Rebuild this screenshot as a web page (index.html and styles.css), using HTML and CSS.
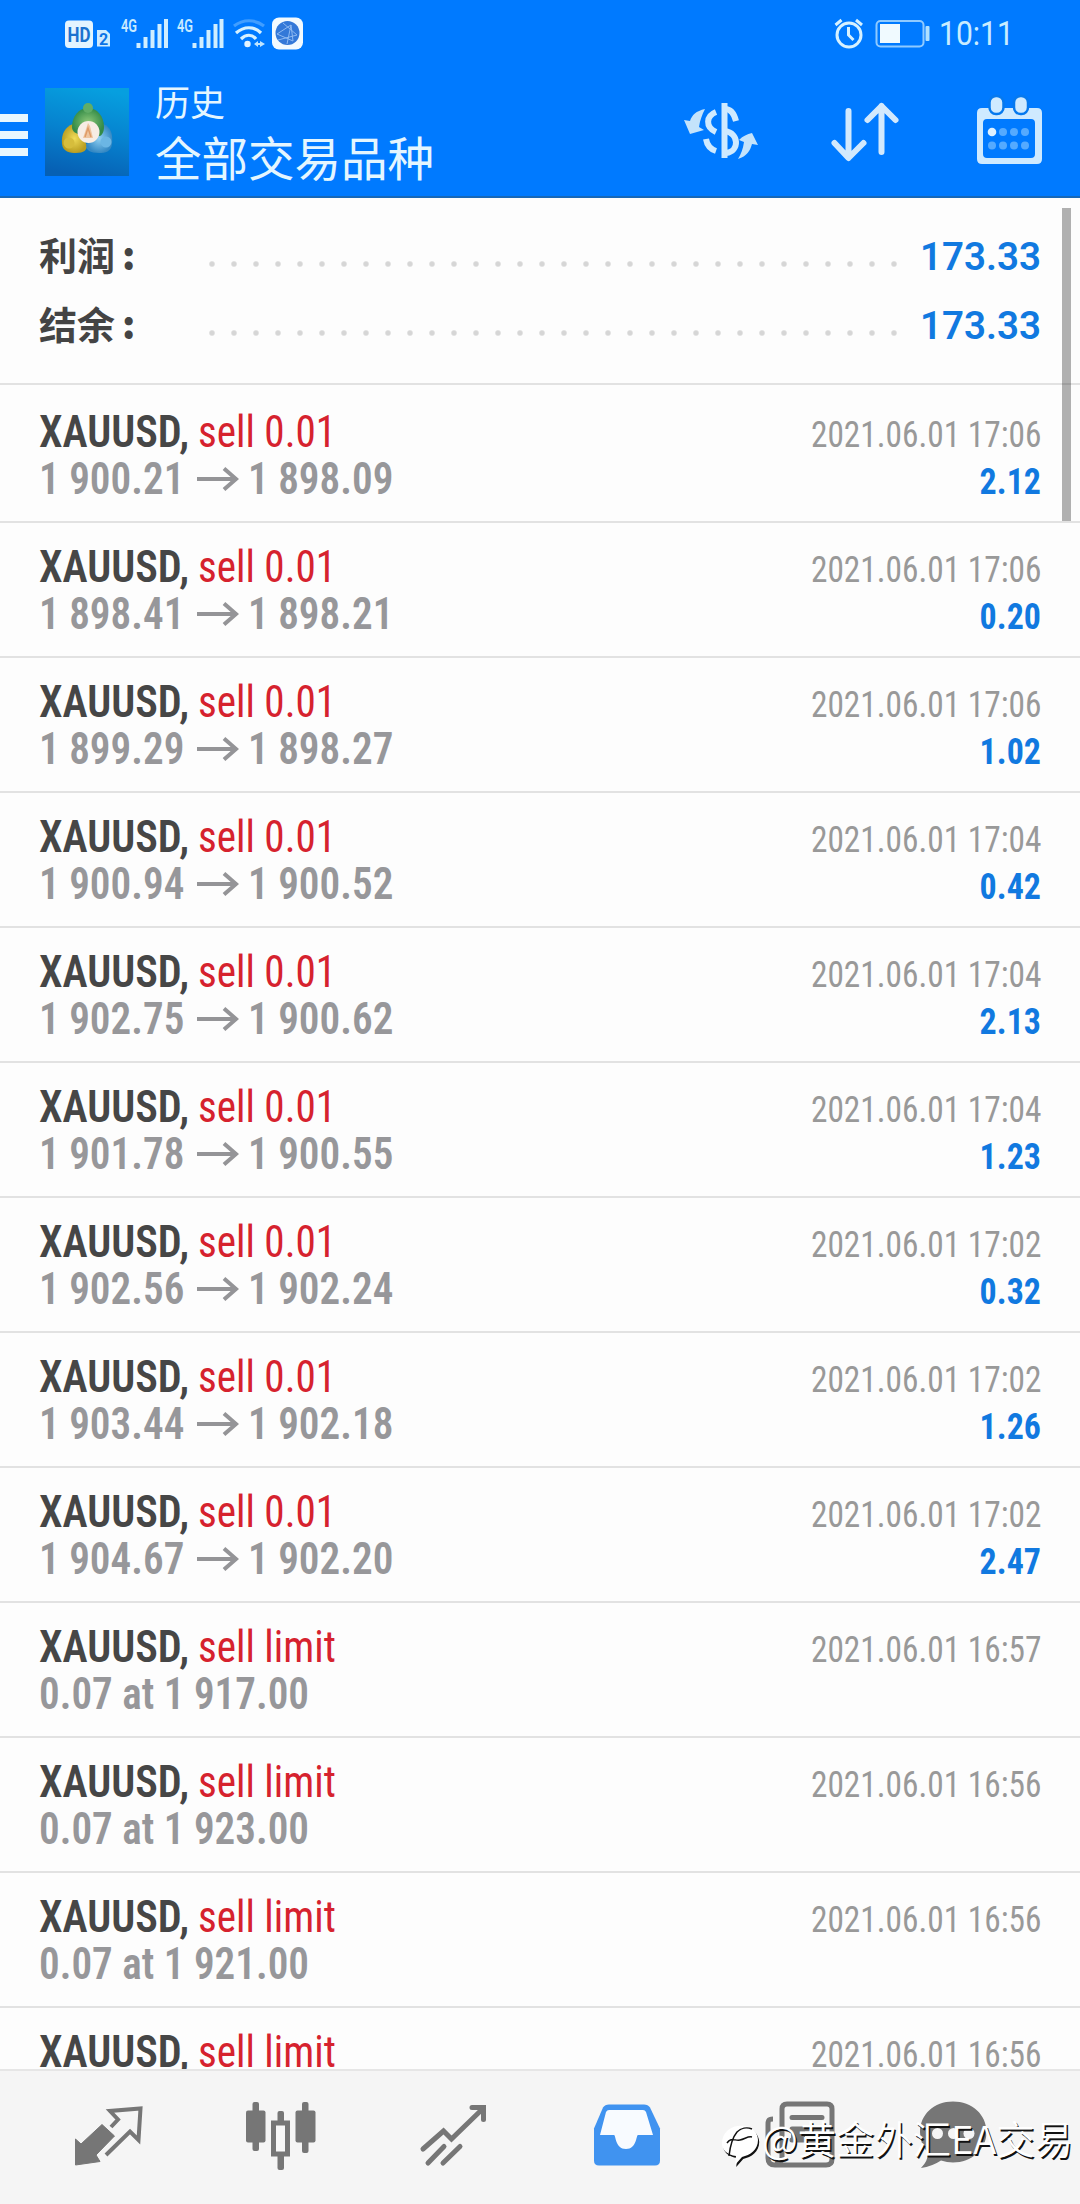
FILE: index.html
```html
<!DOCTYPE html>
<html lang="zh-CN">
<head>
<meta charset="utf-8">
<title>历史</title>
<link rel="stylesheet" href="styles.css">
</head>
<body>
<div class="screen">
  <header class="top">
    <div class="status">
      <svg class="status-left" viewBox="60 10 250 48" width="250" height="48">
        <defs><symbol id="arrow" viewBox="0 0 42 24"><path d="M0 12h39M27 1.500l12 10.500-12 10.500"/></symbol></defs>
        <rect x="65" y="20.500" width="28" height="27.500" rx="4" fill="#e3f4ff"/>
        <text x="79" y="41.500" class="hd" textLength="23" lengthAdjust="spacingAndGlyphs">HD</text>
        <path d="M97 30h9l4 4v12.500H97z" fill="#cdebff"/>
        <text x="103.500" y="44.500" class="sim">2</text>
        <text x="121" y="32" class="net" textLength="16" lengthAdjust="spacingAndGlyphs">4G</text>
        <path d="M138.500 48v-5M145.500 48V37M152.500 48V30M159.500 48V24M166 48V19" class="bars"/>
        <text x="177" y="32" class="net" textLength="16" lengthAdjust="spacingAndGlyphs">4G</text>
        <path d="M194.500 48v-5M201.500 48V37M208.500 48V30M215.500 48V24M221.500 48V19" class="bars"/>
        <g fill="none" stroke="#d6f1ff" stroke-width="3.200">
          <path d="M234 26c9-7 21-7 30 0" opacity=".3"/>
          <path d="M236 33c8-7 18-7 25 0"/>
          <path d="M241 39c5-5 11-5 15 0"/>
        </g>
        <circle cx="247.500" cy="44" r="3.200" fill="#e3f4ff"/>
        <path d="M254 44l4-3v2h2v-2l5 3-5 3v-2h-2v2z" fill="#bfe5ff"/>
        <rect x="272" y="17.500" width="31" height="32" rx="7" fill="#f2faff"/>
        <circle cx="287.500" cy="33" r="12" fill="#3378d8"/>
        <path d="M277 34l14-9 2 16-16-7M283 23l14 12M291 25l-4 19M278 40l19-5" stroke="#8db9f2" stroke-width="1" fill="none"/>
      </svg>
      <div class="status-right">
        <svg viewBox="832 16 102 36" width="102" height="36">
          <circle cx="849" cy="35" r="12" fill="none" stroke="#d6f1ff" stroke-width="3"/>
          <path d="M848.500 27v8l5 5" fill="none" stroke="#d6f1ff" stroke-width="3"/>
          <path d="M835.500 25l6-5M862 25l-6-5" stroke="#d6f1ff" stroke-width="3"/>
          <rect x="876.500" y="21" width="47" height="25.500" rx="4" fill="none" stroke="#8fcaff" stroke-width="2"/>
          <rect x="880" y="24" width="20" height="19" fill="#f0faff"/>
          <rect x="925.500" y="26" width="4" height="15" rx="1" fill="#b0e0ff"/>
        </svg>
        <span class="clock">10:11</span>
      </div>
    </div>
    <div class="bar">
      <div class="menu"><i></i><i></i><i></i></div>
      <svg class="app-icon" viewBox="45 88 84 88" width="84" height="88">
        <defs>
          <linearGradient id="sky" x1="0.600" y1="0" x2="0.400" y2="1"><stop offset="0" stop-color="#069fdf"/><stop offset=".5" stop-color="#0682cf"/><stop offset="1" stop-color="#0660b4"/></linearGradient>
          <radialGradient id="gold"><stop offset="0" stop-color="#f0dc58"/><stop offset="1" stop-color="#b99d20"/></radialGradient>
          <radialGradient id="leaf"><stop offset="0" stop-color="#8cc878"/><stop offset="1" stop-color="#338b48"/></radialGradient>
          <radialGradient id="aqua"><stop offset="0" stop-color="#8fd0f2"/><stop offset="1" stop-color="#3589c4"/></radialGradient>
        </defs>
        <rect x="45" y="88" width="84" height="88" fill="url(#sky)"/>
        <path d="M73 124c-8 3-12 10-11 20 1 8 8 9 14 9 8 0 11-3 11-8z" fill="url(#gold)"/>
        <path d="M103 124c8 3 10 10 9 20-1 8-7 9-13 9-9 0-13-3-13-8z" fill="url(#aqua)"/>
        <path d="M72 127c0-11 7-19 16-19s16 8 16 19c0 5-2 8-4 9L78 134c-3-1-6-3-6-7z" fill="url(#leaf)"/>
        <circle cx="88" cy="108" r="5" fill="#61ad67"/>
        <circle cx="69" cy="143" r="5.500" fill="#d6bd3c"/>
        <circle cx="106" cy="142" r="5.500" fill="#6bb6e4"/>
        <circle cx="88.500" cy="132" r="11" fill="#f7ede4"/>
        <path d="M83 138l5-15 2 3 3 12z" fill="#eec5a0"/><path d="M85 137l3-9 3 9" fill="none" stroke="#df9b67" stroke-width="1.500"/>
      </svg>
      <div class="titles"><div class="title">历史</div><div class="subtitle">全部交易品种</div></div>
      <svg class="tools" viewBox="680 90 370 80" width="370" height="80">
        <g fill="none" stroke="#cfeaff" stroke-width="6">
          <path d="M724.500 103v55"/>
          <path d="M716 112c-10 4-11 15 0 20M706 139c1 6 4 10 10 12"/>
          <path d="M725 109c6 0 9 4 11 12M725 131c14 2 15 20 1 22"/>
        </g>
        <g fill="#c4e3fb">
          <path d="M705 109c-9 2-13 6-15 12l-6-1 6 14 14-4-5-3c1-7 3-12 6-18z"/>
          <path d="M738 159c9-3 12-8 14-15l6 1-6-12c-5 1-9 3-13 7l5 2c-1 7-3 12-6 17z"/>
        </g>
        <g fill="none" stroke="#d2e9fd" stroke-width="6" stroke-linecap="round" stroke-linejoin="round">
          <path d="M848.500 111v46M834.500 143l14 15 15-15"/>
          <path d="M881.500 152v-46M867.500 120l14-14 14 14"/>
        </g>
        <path d="M982 108h55q5 0 5 5v46q0 5-5 5h-55q-5 0-5-5v-46q0-5 5-5zM987 119q-4 0-4 4v31q0 4 4 4h44q4 0 4-4v-31q0-4-4-4z" fill="#cfeaff" fill-rule="evenodd"/>
        <g fill="#cfeaff" stroke="#0679ee" stroke-width="2.500"><rect x="989.500" y="96" width="14" height="18" rx="6.500"/><rect x="1014" y="96" width="14" height="18" rx="6.500"/></g>
        <g fill="#55aaff"><circle cx="1003" cy="132" r="4"/><circle cx="1014" cy="132" r="4"/><circle cx="1025" cy="132" r="4"/><circle cx="992" cy="145.500" r="4"/><circle cx="1003" cy="145.500" r="4"/><circle cx="1014" cy="145.500" r="4"/><circle cx="1025" cy="145.500" r="4"/></g>
        <circle cx="992" cy="132" r="4.300" fill="#dff1ff"/>
      </svg>
    </div>
  </header>

  <main class="history">
    <section class="summary">
      <div class="total"><span class="label">利润<b>:</b></span><span class="dots"></span><span class="amount">173.33</span></div>
      <div class="total"><span class="label">结余<b>:</b></span><span class="dots"></span><span class="amount">173.33</span></div>
    </section>
    <ul class="deals">
      <li class="deal"><div class="line"><span class="symbol">XAUUSD,</span><span class="side">sell 0.01</span><span class="time">2021.06.01 17:06</span></div><div class="line"><span class="open">1 900.21</span><svg class="arrow"><use href="#arrow"/></svg><span class="close">1 898.09</span><span class="profit">2.12</span></div></li>
      <li class="deal"><div class="line"><span class="symbol">XAUUSD,</span><span class="side">sell 0.01</span><span class="time">2021.06.01 17:06</span></div><div class="line"><span class="open">1 898.41</span><svg class="arrow"><use href="#arrow"/></svg><span class="close">1 898.21</span><span class="profit">0.20</span></div></li>
      <li class="deal"><div class="line"><span class="symbol">XAUUSD,</span><span class="side">sell 0.01</span><span class="time">2021.06.01 17:06</span></div><div class="line"><span class="open">1 899.29</span><svg class="arrow"><use href="#arrow"/></svg><span class="close">1 898.27</span><span class="profit">1.02</span></div></li>
      <li class="deal"><div class="line"><span class="symbol">XAUUSD,</span><span class="side">sell 0.01</span><span class="time">2021.06.01 17:04</span></div><div class="line"><span class="open">1 900.94</span><svg class="arrow"><use href="#arrow"/></svg><span class="close">1 900.52</span><span class="profit">0.42</span></div></li>
      <li class="deal"><div class="line"><span class="symbol">XAUUSD,</span><span class="side">sell 0.01</span><span class="time">2021.06.01 17:04</span></div><div class="line"><span class="open">1 902.75</span><svg class="arrow"><use href="#arrow"/></svg><span class="close">1 900.62</span><span class="profit">2.13</span></div></li>
      <li class="deal"><div class="line"><span class="symbol">XAUUSD,</span><span class="side">sell 0.01</span><span class="time">2021.06.01 17:04</span></div><div class="line"><span class="open">1 901.78</span><svg class="arrow"><use href="#arrow"/></svg><span class="close">1 900.55</span><span class="profit">1.23</span></div></li>
      <li class="deal"><div class="line"><span class="symbol">XAUUSD,</span><span class="side">sell 0.01</span><span class="time">2021.06.01 17:02</span></div><div class="line"><span class="open">1 902.56</span><svg class="arrow"><use href="#arrow"/></svg><span class="close">1 902.24</span><span class="profit">0.32</span></div></li>
      <li class="deal"><div class="line"><span class="symbol">XAUUSD,</span><span class="side">sell 0.01</span><span class="time">2021.06.01 17:02</span></div><div class="line"><span class="open">1 903.44</span><svg class="arrow"><use href="#arrow"/></svg><span class="close">1 902.18</span><span class="profit">1.26</span></div></li>
      <li class="deal"><div class="line"><span class="symbol">XAUUSD,</span><span class="side">sell 0.01</span><span class="time">2021.06.01 17:02</span></div><div class="line"><span class="open">1 904.67</span><svg class="arrow"><use href="#arrow"/></svg><span class="close">1 902.20</span><span class="profit">2.47</span></div></li>
      <li class="deal"><div class="line"><span class="symbol">XAUUSD,</span><span class="side">sell limit</span><span class="time">2021.06.01 16:57</span></div><div class="line"><span class="order">0.07 at 1 917.00</span></div></li>
      <li class="deal"><div class="line"><span class="symbol">XAUUSD,</span><span class="side">sell limit</span><span class="time">2021.06.01 16:56</span></div><div class="line"><span class="order">0.07 at 1 923.00</span></div></li>
      <li class="deal"><div class="line"><span class="symbol">XAUUSD,</span><span class="side">sell limit</span><span class="time">2021.06.01 16:56</span></div><div class="line"><span class="order">0.07 at 1 921.00</span></div></li>
      <li class="deal"><div class="line"><span class="symbol">XAUUSD,</span><span class="side">sell limit</span><span class="time">2021.06.01 16:56</span></div></li>
    </ul>
    <div class="scrollbar"></div>
  </main>

  <nav class="tabs">
    <svg viewBox="68 2096 80 80" width="80" height="80">
      <path d="M102 2124.500l12.500 11.500-18.500 19 4 6.500-24.500 3.500v-26l5.500 5z" fill="#767676" stroke="#767676" stroke-linejoin="round"/>
      <path d="M111 2127l7-7.500-8-8.500 30.500-2.500-2 31.500-8.500-8.500-24 23.500" fill="none" stroke="#767676" stroke-width="4"/>
    </svg>
    <svg viewBox="241 2096 80 80" width="80" height="80">
      <g fill="#767676"><rect x="246" y="2110.500" width="19.500" height="32" rx="2"/><rect x="252.500" y="2102" width="6.500" height="49" rx="2"/><rect x="295.500" y="2110.500" width="20" height="32" rx="2"/><rect x="302" y="2102" width="6.500" height="51" rx="2"/><rect x="277.500" y="2111" width="6.500" height="12" rx="2"/><rect x="277.500" y="2153" width="6.500" height="17" rx="2"/></g>
      <rect x="273.500" y="2123" width="14" height="31" fill="#f7f7f7" stroke="#767676" stroke-width="5"/>
    </svg>
    <svg viewBox="413 2096 80 80" width="80" height="80">
      <path d="M423 2149l20.500-18 8 8 32-31M472 2107.500h11.500v12M428 2163l16-16.500M443 2163l17-16.500" fill="none" stroke="#767676" stroke-width="5" stroke-linecap="round"/>
    </svg>
    <svg viewBox="586 2096 80 80" width="80" height="80">
      <path d="M609 2104.500h35q4 0 6 3l10 21v32q0 5-5 5h-56q-5 0-5-5v-32l9-21q2-3 6-3z" fill="#4093f0"/>
      <path d="M609 2110q-2 0-3 2l-6 23h14c2 0 1 14 12 14s10-14 12-14h15l-7-23q-1-2-3-2z" fill="#f8fbff"/>
    </svg>
    <svg viewBox="759 2096 80 80" width="80" height="80">
      <g fill="none" stroke="#767676" stroke-width="5"><path d="M774 2119c-5 0-5 2-5 6v33q0 7 7 7h51q6 0 6-6v-50q0-5-5-5h-40q-5 0-5 5v48q0 7-7 7"/><path d="M793 2117.500h30M793 2129h30M793 2140h30" stroke-linecap="round"/></g>
      <rect x="792" y="2127" width="14" height="15" fill="#767676"/>
    </svg>
    <svg viewBox="913 2096 80 80" width="80" height="80">
      <path d="M953 2101.500c19 0 33.500 13 33.500 30.500s-15 30.500-33.500 30.500q-6 0-12-2-9 6-20 7.500 7-7 7-15-8-9-8-21c0-17.500 14-30.500 33-30.500z" fill="#767676"/>
      <g fill="#f5f5f5"><circle cx="937.500" cy="2133.500" r="5.500"/><circle cx="953.500" cy="2133.500" r="5.500"/><circle cx="969" cy="2133.500" r="5.500"/></g>
    </svg>
  </nav>

  <div class="watermark">
    <svg viewBox="720 2122 42 48" width="42" height="48">
      <path d="M738 2127c11-2 20 5 20 14 0 10-8 15-16 17l-7 8 1-9c-8-1-15-6-14-14 1-9 7-15 16-16z" fill="#111" transform="translate(1.200 1)"/>
      <path d="M738 2126c11-2 20 5 20 14 0 10-8 15-16 17l-7 8 1-9c-8-1-15-6-14-14 1-9 7-15 16-16z" fill="#fff"/>
      <path d="M729 2156c1-9 3-18 8-24 4-4 10-5 15-3M727 2143c4-6 8-2 13-3s8-4 12-3" fill="none" stroke="#111" stroke-width="1.500"/>
    </svg>
    <span>@黄金外汇EA交易</span>
  </div>
</div>
</body>
</html>
```
FILE: styles.css
```css
* { box-sizing: border-box; }
body { margin: 0; background: #fdfdfd; font-family: Roboto, "Noto Sans CJK SC", sans-serif; }
svg { display: block; flex: none; }

.screen {
  position: relative;
  display: flex;
  flex-direction: column;
  width: 1080px;
  height: 2204px;
  overflow: hidden;
}

/* Header */
.top { flex: none; height: 198px; background: #007aff; border-bottom: 2px solid #1768b8; }
.status { display: flex; justify-content: space-between; height: 68px; padding: 10px 68px 0 60px; }
.status-right { display: flex; padding-top: 6px; }
.clock { margin-left: 5px; width: 73px; height: 36px; font-size: 33px; line-height: 36px; color: #c9ecff; white-space: nowrap; transform: scaleX(.91); transform-origin: left; }
.hd { font: 700 20px Roboto, sans-serif; fill: #1b72cf; text-anchor: middle; }
.sim { font: 700 16px Roboto, sans-serif; fill: #0b74e6; text-anchor: middle; }
.net { font: 600 19px Roboto, sans-serif; fill: #c8eaff; }
.bars { stroke: #d0eeff; stroke-width: 4; }

.bar { display: flex; }
.menu { display: flex; flex-direction: column; gap: 9.500px; width: 45px; padding-top: 46px; }
.menu i { width: 27.500px; height: 7.500px; background: #e8f7ff; }
.app-icon { margin-top: 20px; }
.titles { flex: 1; padding: 8px 0 0 26px; color: #e4f6ff; font-family: "Noto Sans CJK SC", sans-serif; white-space: nowrap; }
.title { font-size: 35px; line-height: 50px; }
.subtitle { font-size: 46.500px; line-height: 60px; }
.tools { margin: 22px 30px 0 0; }

/* History */
.history { position: relative; flex: 1; min-height: 0; overflow: hidden; }
.summary { height: 187px; padding: 24px 39px 0; border-bottom: 2px solid #e2e2e2; }
.total { display: flex; height: 69px; }
.label { width: 162px; font: 700 38px/64px "Noto Sans CJK SC", sans-serif; color: #444; }
.label b { margin-left: 7px; }
.dots {
  width: 704px;
  height: 6px;
  margin-top: 39px;
  background: radial-gradient(circle at 11px 3px, #d6d6d6 2px, transparent 3.500px) 0 0 / 22px 6px;
}
.amount { flex: 1; font-size: 38.500px; line-height: 69px; font-weight: 600; color: #1179e0; text-align: right; white-space: nowrap; }

.deals { margin: 0; padding: 3px 0 0; list-style: none; }
.deal { height: 135px; padding: 20.500px 39px 0; border-bottom: 2px solid #e2e2e2; }
.line { display: flex; height: 47px; font-size: 44px; line-height: 47px; font-stretch: 75%; white-space: nowrap; }
.line span { transform-origin: left; }
.symbol { width: 158.500px; font-weight: 600; color: #464646; transform: scaleX(.96); }
.side { font-weight: 450; color: #d6222e; transform: scaleX(.935); }
.line .time { margin-left: auto; font-size: 36.500px; line-height: 52px; color: #999; transform: scaleX(.913); transform-origin: right; }
.open, .close, .order { font-weight: 600; color: #97979a; transform: scaleX(.935); }
.open { width: 158px; }
.arrow { width: 42px; height: 24px; margin: 11px 9px 0 0; fill: none; stroke: #949497; stroke-width: 4; }
.line .profit { margin-left: auto; font-size: 36.500px; line-height: 52px; font-weight: 700; color: #1179e0; transform: scaleX(.93); transform-origin: right; }

.scrollbar { position: absolute; top: 10px; left: 1062px; width: 9px; height: 313px; background: rgba(0, 0, 0, .3); }

/* Bottom tabs */
.tabs { flex: none; display: flex; gap: 92.600px; height: 135px; padding: 25px 0 0 68px; background: #f5f5f5; border-top: 2px solid #e6e6e6; }
.tabs svg:last-child { margin-left: -18px; }

.watermark { position: absolute; left: 720px; top: 2122px; display: flex; }
.watermark span { margin-top: -3px; font: 350 38.300px/38px "Noto Sans CJK SC", sans-serif; color: #fff; text-shadow: 1.500px 1.500px 0 #111; white-space: nowrap; }
```
